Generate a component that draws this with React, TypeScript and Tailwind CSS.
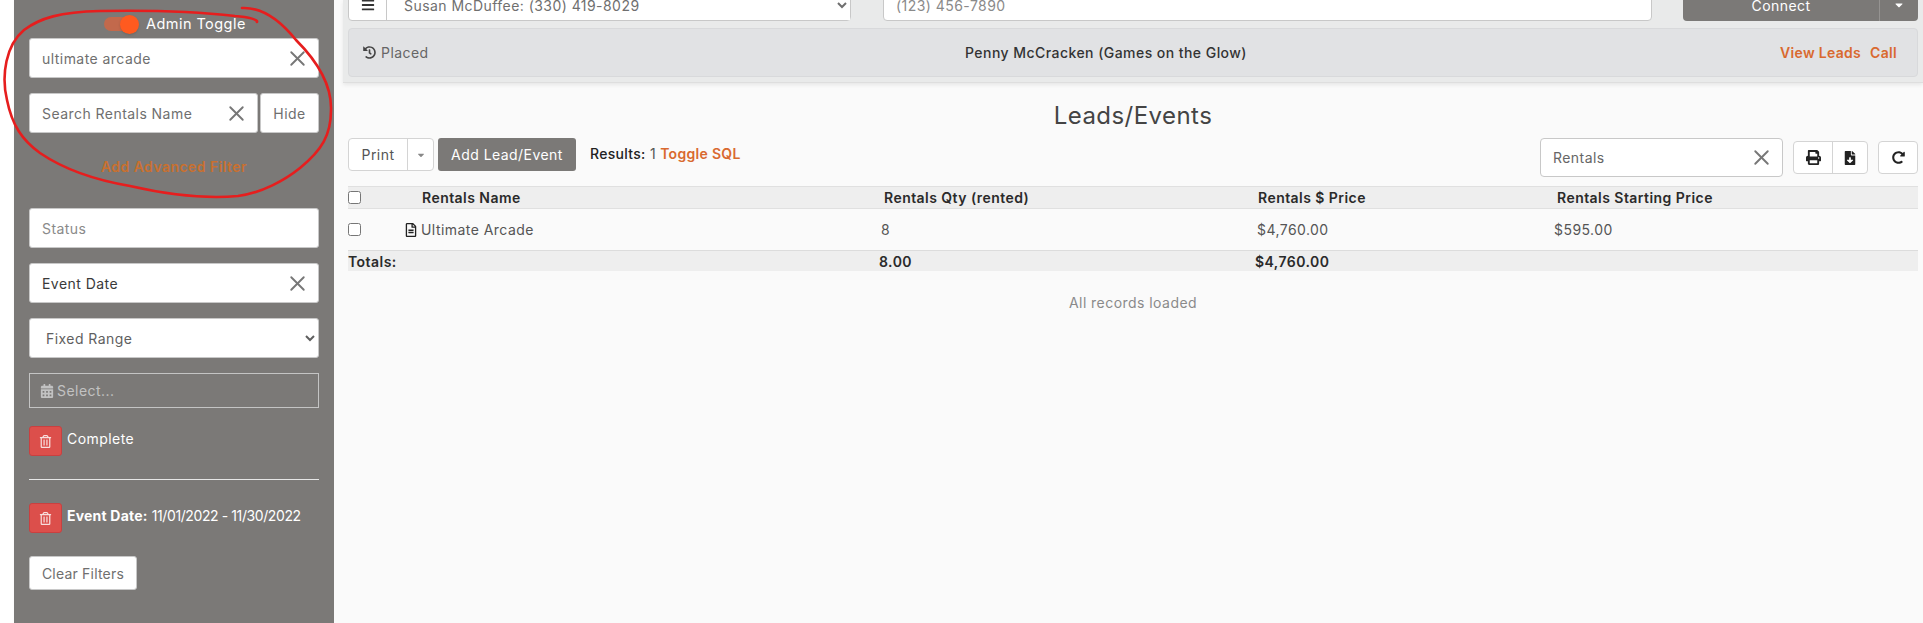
import { X } from 'lucide-react';
import {
  FaBars,
  FaCalendarAlt,
  FaCaretDown,
  FaFileDownload,
  FaHistory,
  FaPrint,
  FaRedoAlt,
  FaRegFileAlt,
  FaRegTrashAlt,
} from 'react-icons/fa';

const ClearableInput = ({ value, dark, className }: { value: string; dark?: boolean; className?: string }) => (
  <div
    className={`flex h-10 items-center justify-between rounded-[3px] border border-[#c8c8c8] bg-white pl-[12px] pr-[8px] text-[14px] ${
      dark ? 'text-[#3a3a3a]' : 'text-[#6f6f6f]'
    } ${className ?? ''}`}
  >
    <span>{value}</span>
    <X size={25} strokeWidth={1.8} className="-my-1 text-[#777777]" />
  </div>
);

const TrashButton = () => (
  <button className="flex h-[30px] w-[33px] shrink-0 items-center justify-center rounded-[3px] border border-[#c94040] bg-[#dc4f4b] text-[#f8dedd]">
    <FaRegTrashAlt size={13} />
  </button>
);

const Sidebar = () => (
  <aside className="ml-[14px] flex h-full w-[320px] shrink-0 flex-col bg-[#7b7977] px-[15px] shadow-[2px_0_4px_rgba(0,0,0,0.12)]">
    <div className="mt-[15px] flex h-[18px] items-center pl-[75px]">
      <div className="relative h-[14px] w-[30px] rounded-full bg-[#c2694c]">
        <div className="absolute -right-[5px] -top-[2px] h-[19px] w-[19px] rounded-full bg-[#ff5a1f] shadow" />
      </div>
      <span className="ml-[12px] text-[14.5px] tracking-[0.45px] text-white">Admin Toggle</span>
    </div>
    <ClearableInput value="ultimate arcade" className="mt-[5px]" />
    <div className="mt-[15px] flex gap-[2px]">
      <ClearableInput value="Search Rentals Name" className="flex-1" />
      <button className="h-10 w-[59px] rounded-[3px] border border-[#c8c8c8] bg-white text-[14px] text-[#6f6f6f]">Hide</button>
    </div>
    <div className="mt-[24px] h-5 text-center text-[14px] font-semibold leading-5 text-[#c9702f]">Add Advanced Filter</div>
    <div className="mt-[31px] flex h-10 items-center rounded-[3px] border border-[#c8c8c8] bg-white pl-[12px] text-[14px] text-[#8a8a8a]">
      Status
    </div>
    <ClearableInput value="Event Date" dark className="mt-[15px]" />
    <select className="mt-[15px] h-10 w-full rounded-[3px] border border-[#c8c8c8] bg-white pl-[12px] text-[14px] text-[#5f5f5f]">
      <option>Fixed Range</option>
    </select>
    <div className="mt-[15px] flex h-[35px] items-center gap-[3px] border border-[#c4c4c4] pl-[10px] text-[14px] text-[#c2c2c2]">
      <FaCalendarAlt size={14} />
      <span>Select...</span>
    </div>
    <div className="mt-[18px] flex items-start gap-[5px]">
      <TrashButton />
      <span className="text-[14px] leading-[26px] text-white">Complete</span>
    </div>
    <hr className="mt-[23px] border-t border-[#e6e6e6]" />
    <div className="mt-[23px] flex items-start gap-[5px]">
      <TrashButton />
      <span className="whitespace-nowrap text-[14px] leading-[26px] tracking-[0.2px] text-white">
        <b className="font-bold">Event Date:</b> <span className="tracking-[-0.4px]">11/01/2022 - 11/30/2022</span>
      </span>
    </div>
    <button className="mt-[23px] h-[34px] w-[108px] rounded-[3px] border border-[#c8c8c8] bg-white text-[14px] tracking-[0.2px] text-[#6f6f6f]">
      Clear Filters
    </button>
  </aside>
);

const TopBar = () => (
  <header className="h-[83px] shrink-0 overflow-hidden border-b border-[#dedede] bg-[#e9eaea] px-[5px] shadow-[0_2px_4px_rgba(0,0,0,0.08)]">
    <div className="-mt-[11px] flex h-8 items-stretch">
      <div className="flex w-[503px] rounded-[4px] border border-[#c8c8c8] bg-white">
        <div className="flex w-[38px] items-center justify-center border-r border-[#c8c8c8] text-[#333333]">
          <FaBars size={14} />
        </div>
        <select className="h-full flex-1 bg-white pl-[13px] text-[14px] text-[#6f6f6f]">
          <option>Susan McDuffee: (330) 419-8029</option>
        </select>
      </div>
      <div className="ml-[32px] flex w-[769px] items-center rounded-[4px] border border-[#c8c8c8] bg-white pl-[12px] text-[14px] text-[#8a8a8a]">
        (123) 456-7890
      </div>
      <div className="ml-[31px] flex w-[235px] rounded-[4px] bg-[#7b7977] text-[14px] text-white">
        <div className="flex flex-1 items-center justify-center border-r border-[#959391]">Connect</div>
        <div className="flex w-[38px] items-center justify-center">
          <FaCaretDown size={12} />
        </div>
      </div>
    </div>
    <div className="mt-[7px] flex h-[49px] items-center rounded-[4px] border border-[#d8d9db] bg-[#e1e2e4] px-[14px] text-[14px]">
      <div className="flex w-[250px] items-center gap-[5px] text-[#666666]">
        <FaHistory size={13} className="text-[#444444]" />
        Placed
      </div>
      <div className="flex-1 text-center font-medium text-[#333333]">Penny McCracken (Games on the Glow)</div>
      <div className="flex w-[304px] justify-end gap-[9px] pr-[6px] font-semibold tracking-[0.3px] text-[#d9692f]">
        <span>View Leads</span>
        <span>Call</span>
      </div>
    </div>
  </header>
);

const Toolbar = () => (
  <div className="mt-[6px] flex items-start">
    <div className="flex h-[33px] w-[86px] rounded-[4px] border border-[#d4d4d4] bg-white text-[14px] text-[#555555]">
      <div className="flex flex-1 items-center justify-center border-r border-[#d4d4d4]">Print</div>
      <div className="flex w-[25px] items-center justify-center text-[#888888]">
        <FaCaretDown size={10} />
      </div>
    </div>
    <button className="ml-[4px] h-[33px] w-[138px] rounded-[3px] bg-[#7b7977] text-[14px] text-white">Add Lead/Event</button>
    <div className="ml-[14px] h-[33px] text-[14px] leading-[31px] tracking-[0.3px]">
      <span className="font-medium text-[#222222]">Results:</span> <span className="text-[#555555]">1</span>{' '}
      <span className="font-semibold text-[#d9692f]">Toggle SQL</span>
    </div>
    <ClearableInput value="Rentals" className="ml-auto h-[39px] w-[243px] rounded-[4px] text-[#666666]" />
    <div className="ml-[10px] mt-[3px] flex h-[33px] w-[75px] rounded-[4px] border border-[#d4d4d4] bg-white text-[#222222]">
      <div className="flex w-[39px] items-center justify-center border-r border-[#d4d4d4]">
        <FaPrint size={15} />
      </div>
      <div className="flex flex-1 items-center justify-center">
        <FaFileDownload size={14} />
      </div>
    </div>
    <div className="ml-[10px] mt-[3px] flex h-[33px] w-[40px] items-center justify-center rounded-[4px] border border-[#d4d4d4] bg-white text-[#222222]">
      <FaRedoAlt size={13} />
    </div>
  </div>
);

const gridCols = 'grid grid-cols-[74px_462px_374px_299px_1fr]';

const LeadsTable = () => (
  <div className="mt-[9px] text-[14px]">
    <div className={`${gridCols} h-[23px] items-center border-y border-[#e0e0e0] bg-[#eeeeee] font-semibold text-[#2a2a2a]`}>
      <input type="checkbox" className="h-[13px] w-[13px]" />
      <span>Rentals Name</span>
      <span>Rentals Qty (rented)</span>
      <span>Rentals $ Price</span>
      <span>Rentals Starting Price</span>
    </div>
    <div className={`${gridCols} h-[41px] items-center text-[#555555]`}>
      <div className="relative">
        <input type="checkbox" className="block h-[13px] w-[13px]" />
        <FaRegFileAlt size={14} className="absolute left-[56px] top-0 text-[#222222]" />
      </div>
      <span className="-ml-[1px]">Ultimate Arcade</span>
      <span className="-ml-[3px]">8</span>
      <span className="-ml-[1px]">$4,760.00</span>
      <span className="-ml-[3px]">$595.00</span>
    </div>
    <div className={`${gridCols} h-[21px] items-center border-t border-[#dcdcdc] bg-[#eeeeee] font-semibold text-[#2a2a2a]`}>
      <span className="col-span-2">Totals:</span>
      <span className="-ml-[5px]">8.00</span>
      <span className="-ml-[3px]">$4,760.00</span>
    </div>
    <div className="mt-[21px] text-center text-[#8a8a8a]">All records loaded</div>
  </div>
);

const Scribble = () => (
  <svg width="340" height="210" viewBox="0 0 340 210" fill="none" className="pointer-events-none absolute left-0 top-0">
    <path
      d="M242 8 C262 7 280 20 296 40 C312 56 332 80 331 110 C331 135 322 150 300 168 C285 180 262 193 238 196 C205 199 165 194 130 186 C95 180 65 170 40 153 C22 140 12 125 7 100 C1 75 6 45 24 30 C40 18 60 12 100 11 C150 10 200 12 235 16 C250 17 258 20 257 22"
      stroke="#e61e1e"
      strokeWidth="2.6"
      strokeLinecap="round"
    />
  </svg>
);

export default function App() {
  return (
    <div className="relative flex h-[623px] w-[1923px] overflow-hidden bg-white font-['Inter','Liberation_Sans',sans-serif] tracking-[0.45px]">
      <Sidebar />
      <main className="flex min-w-0 flex-1 flex-col bg-[#fafafa] pl-[9px]">
        <TopBar />
        <div className="pl-[5px] pr-[5px]">
          <h1 className="mt-[17px] h-[32px] text-center text-[24px] leading-[32px] text-[#444444]">Leads/Events</h1>
          <Toolbar />
          <LeadsTable />
        </div>
      </main>
      <Scribble />
    </div>
  );
}
